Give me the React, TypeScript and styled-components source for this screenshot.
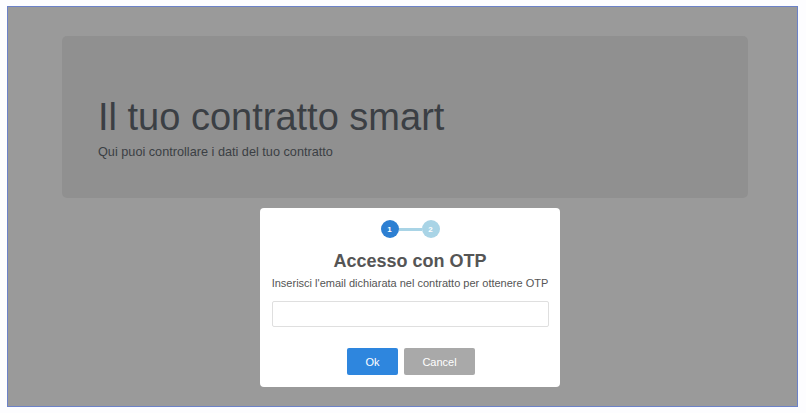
import React from "react";
import styled, { createGlobalStyle } from "styled-components";

const Global = createGlobalStyle`
  html, body { margin: 0; padding: 0; background: #ffffff; }
  body { font-family: "Liberation Sans", Arial, sans-serif; }
  * { box-sizing: border-box; }
`;

const Outer = styled.div`
  width: 806px;
  height: 413px;
  padding: 6px 8px 6px 7px;
  background: #fdfdff;
`;

const Screen = styled.div`
  width: 100%;
  height: 100%;
  border: 1px solid #6c82c8;
  background: #9a9a9a;
  display: flex;
  flex-direction: column;
  padding: 29px 48px 0 54px;
`;

const Jumbotron = styled.section`
  width: 686px;
  height: 162px;
  background: #909090;
  border-radius: 5px;
  padding: 58px 36px 0 36px;
`;

const HeroTitle = styled.h1`
  margin: 0;
  font-size: 38px;
  font-weight: 400;
  line-height: 46px;
  color: #3b3f44;
`;

const HeroLead = styled.p`
  margin: 4px 0 0 0;
  font-size: 12.7px;
  line-height: 16px;
  color: #3b3f44;
`;

const Modal = styled.div`
  margin: 10px 0 0 198px;
  width: 300px;
  height: 179px;
  background: #ffffff;
  border-radius: 4px;
  padding: 12px 12px 0 12px;
  display: flex;
  flex-direction: column;
  align-items: center;
`;

const Stepper = styled.div`
  display: flex;
  align-items: center;
`;

const Step = styled.div<{ $active?: boolean }>`
  width: 18px;
  height: 18px;
  border-radius: 50%;
  background: ${(p) => (p.$active ? "#2d7fd2" : "#a9d4e6")};
  color: #ffffff;
  font-size: 8px;
  font-weight: 700;
  display: flex;
  align-items: center;
  justify-content: center;
`;

const StepLine = styled.div`
  width: 23px;
  height: 3px;
  background: #a9d4e6;
`;

const Title = styled.h2`
  margin: 12px 0 0 0;
  font-size: 18px;
  font-weight: 700;
  line-height: 22px;
  color: #555555;
`;

const Subtitle = styled.p`
  margin: 5px 0 0 0;
  font-size: 11px;
  line-height: 13px;
  color: #555555;
  text-align: center;
  white-space: nowrap;
`;

const Input = styled.input`
  margin-top: 11px;
  width: 277px;
  height: 26px;
  border: 1px solid #dfdfdf;
  border-radius: 2px;
  outline: none;
  background: #fff;
`;

const Actions = styled.div`
  margin-top: 21px;
  display: flex;
  gap: 6px;
  margin-left: 2px;
`;

const Button = styled.button<{ $variant: "primary" | "muted" }>`
  height: 27px;
  width: ${(p) => (p.$variant === "primary" ? "51px" : "71px")};
  border: none;
  border-radius: 2px;
  color: #ffffff;
  font-family: "Liberation Sans", Arial, sans-serif;
  font-size: 11px;
  background: ${(p) => (p.$variant === "primary" ? "#2e86de" : "#a9a9a9")};
  cursor: pointer;
`;

export default function App() {
  return (
    <>
      <Global />
      <Outer>
        <Screen>
          <Jumbotron>
            <HeroTitle>Il tuo contratto smart</HeroTitle>
            <HeroLead>Qui puoi controllare i dati del tuo contratto</HeroLead>
          </Jumbotron>
          <Modal>
            <Stepper>
              <Step $active>1</Step>
              <StepLine />
              <Step>2</Step>
            </Stepper>
            <Title>Accesso con OTP</Title>
            <Subtitle>Inserisci l'email dichiarata nel contratto per ottenere OTP</Subtitle>
            <Input type="email" />
            <Actions>
              <Button $variant="primary">Ok</Button>
              <Button $variant="muted">Cancel</Button>
            </Actions>
          </Modal>
        </Screen>
      </Outer>
    </>
  );
}
